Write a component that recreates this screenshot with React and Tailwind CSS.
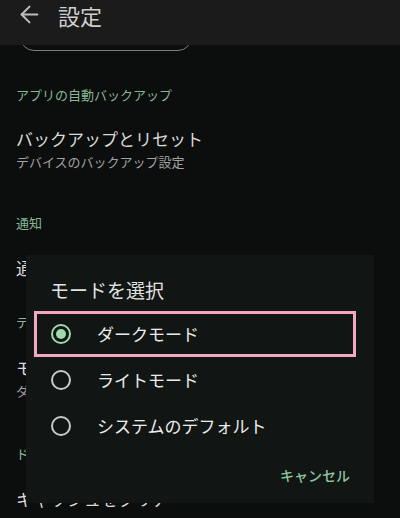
import { ArrowLeft } from "lucide-react";

const font = { fontFamily: '"Noto Sans CJK JP", "Noto Sans", sans-serif' };

const SectionHeader = ({ children, className = "" }) => (
  <div className={`text-[13px] leading-[20px] text-[#86b896] ${className}`}>{children}</div>
);

const ItemTitle = ({ children, className = "" }) => (
  <div className={`text-[17px] leading-[24px] text-[#dadada] ${className}`}>{children}</div>
);

const ItemSub = ({ children, className = "" }) => (
  <div className={`text-[13px] leading-[20px] text-[#a3a3a3] ${className}`}>{children}</div>
);

const Radio = ({ checked }) =>
  checked ? (
    <span className="flex h-[20px] w-[20px] items-center justify-center rounded-full border-2 border-[#9fd8ad]">
      <span className="h-[10px] w-[10px] rounded-full bg-[#9fd8ad]" />
    </span>
  ) : (
    <span className="h-[20px] w-[20px] rounded-full border-2 border-[#c9c9c9]" />
  );

const options = [
  { label: "ダークモード", checked: true },
  { label: "ライトモード", checked: false },
  { label: "システムのデフォルト", checked: false },
];

const App = () => {
  return (
    <div className="relative h-[518px] w-[400px] overflow-hidden bg-[#0c0d0d]" style={font}>
      <header className="flex h-[45px] items-center bg-[#1a1b1a]">
        <ArrowLeft className="ml-[16px] -mt-[16px] h-[27px] w-[27px] text-[#bdbdbd]" strokeWidth={1.8} />
        <h1 className="ml-[15px] -mt-[16px] text-[22px] leading-[30px] text-[#cfcfcf]">設定</h1>
      </header>

      <div className="mx-[20px] h-[6px] w-[172px] overflow-hidden">
        <div className="-mt-[34px] h-[40px] rounded-[14px] border border-[#7d7d7d]" />
      </div>

      <div className="px-[16px]">
        <SectionHeader className="mt-[34px]">アプリの自動バックアップ</SectionHeader>
        <ItemTitle className="mt-[22px]">バックアップとリセット</ItemTitle>
        <ItemSub className="mt-[1px]">デバイスのバックアップ設定</ItemSub>

        <SectionHeader className="mt-[41px]">通知</SectionHeader>
        <ItemTitle className="mt-[23px]">通知設定</ItemTitle>

        <SectionHeader className="mt-[32px]">テーマ</SectionHeader>
        <ItemTitle className="mt-[24px]">モード</ItemTitle>
        <ItemSub className="mt-[1px]">ダークモード</ItemSub>

        <SectionHeader className="mt-[43px]">ドキュメント</SectionHeader>
        <ItemTitle className="mt-[23px]">キャッシュをクリア</ItemTitle>
      </div>

      <div className="absolute left-[26px] top-[255px] h-[248px] w-[348px] bg-[#111513]">
        <h2 className="ml-[24px] mt-[22px] text-[19px] leading-[26px] text-[#e2e2e2]">モードを選択</h2>
        <div className="mt-[8px] flex flex-col">
          {options.map((o) => (
            <div
              key={o.label}
              className={`ml-[8px] flex h-[46px] w-[322px] items-center ${
                o.checked ? "border-[3px] border-[#f5a6c0]" : ""
              }`}
            >
              <div className={`flex items-center ${o.checked ? "ml-[14px]" : "ml-[17px]"}`}>
                <Radio checked={o.checked} />
                <span className="ml-[26px] text-[17px] leading-[24px] text-[#ececec]">{o.label}</span>
              </div>
            </div>
          ))}
        </div>
        <div className="mr-[24px] mt-[16px] flex justify-end">
          <button className="text-[14px] font-medium leading-[20px] text-[#8fc49f]">キャンセル</button>
        </div>
      </div>
    </div>
  );
};

export default App;
